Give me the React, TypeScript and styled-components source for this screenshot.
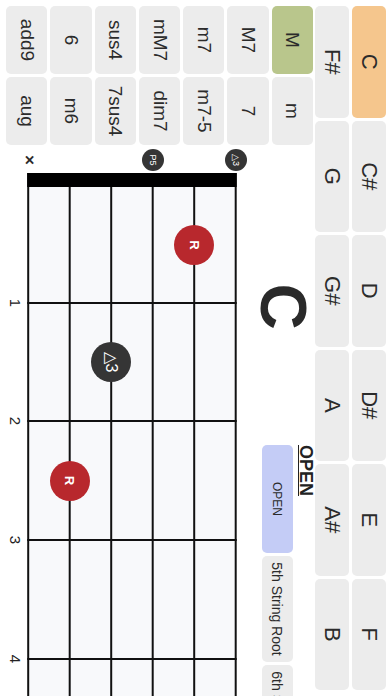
import React from 'react';
import styled, { createGlobalStyle } from 'styled-components';

const Global = createGlobalStyle`
  html, body { margin: 0; padding: 0; width: 392px; height: 696px; overflow: hidden; background: #ffffff; }
  #root { width: 392px; height: 696px; }
  * { box-sizing: border-box; }
`;

const Viewport = styled.div`
  position: relative;
  width: 392px;
  height: 696px;
  overflow: hidden;
  background: #ffffff;
`;

const Landscape = styled.div`
  width: 696px;
  height: 392px;
  transform-origin: 0 0;
  transform: translateX(392px) rotate(90deg);
  font-family: "Liberation Sans", Arial, sans-serif;
  color: #2b2b2b;
  display: flex;
  flex-direction: column;
  background: #ffffff;
`;

const NoteGrid = styled.div`
  display: grid;
  grid-template-columns: repeat(6, 1fr);
  grid-template-rows: 34px 34px;
  gap: 3px;
  padding: 6px 6px 0 6px;
`;

const NoteButton = styled.div<{ $active?: boolean }>`
  display: flex;
  align-items: center;
  justify-content: center;
  border-radius: 5px;
  background: ${(p) => (p.$active ? '#f5c68d' : '#ececec')};
  font-size: 22px;
  color: #2b2b2b;
`;

const Body = styled.div`
  display: flex;
  margin-top: 2px;
  flex: 1;
  min-height: 0;
`;

const QualityGrid = styled.div`
  margin-left: 6px;
  width: 139px;
  height: 307px;
  display: grid;
  grid-template-columns: 68px 68px;
  grid-template-rows: repeat(7, 1fr);
  gap: 3px;
  flex: none;
`;

const QualityButton = styled.div<{ $active?: boolean }>`
  display: flex;
  align-items: center;
  justify-content: center;
  border-radius: 5px;
  background: ${(p) => (p.$active ? '#b9c68c' : '#ececec')};
  font-size: 19px;
  color: #2b2b2b;
`;

const RightPanel = styled.div`
  margin-left: 3px;
  flex: 1;
  display: flex;
  flex-direction: column;
  min-width: 0;
`;

const Header = styled.div`
  height: 56px;
  display: flex;
  flex: none;
`;

const ChordName = styled.div`
  width: 297px;
  flex: none;
  padding: 2px 0 0 20px;
  text-align: center;
  font-size: 64px;
  font-weight: 700;
  line-height: 56px;
  color: #2a2a2a;
`;

const VoicingGroup = styled.div`
  display: flex;
  flex-direction: column;
  min-width: 0;
  flex: 1;
  margin-top: -3px;
`;

const VoicingTitle = styled.div`
  font-size: 18px;
  font-weight: 700;
  line-height: 20px;
  text-decoration: underline;
  text-decoration-thickness: 1px;
  color: #222;
`;

const VoicingRow = styled.div`
  display: flex;
  gap: 3px;
  margin-top: 3px;
  overflow: hidden;
`;

const VoicingButton = styled.div<{ $active?: boolean; $w: number; $fs: number }>`
  flex: none;
  width: ${(p) => p.$w}px;
  height: 31px;
  border-radius: 5px;
  display: flex;
  align-items: center;
  justify-content: ${(p) => (p.$w > 60 ? 'center' : 'flex-start')};
  padding-left: ${(p) => (p.$w > 60 ? 0 : 6)}px;
  white-space: nowrap;
  overflow: hidden;
  background: ${(p) => (p.$active ? '#c4ccf6' : '#ececec')};
  font-size: ${(p) => p.$fs}px;
  color: #2b2b2b;
`;

const Fretboard = styled.div`
  position: relative;
  flex: 1;
  min-height: 0;
`;

const Marker = styled.div<{ $size: number; $tone: 'root' | 'dark'; $fs: number }>`
  position: absolute;
  width: ${(p) => p.$size}px;
  height: ${(p) => p.$size}px;
  margin-left: ${(p) => -p.$size / 2}px;
  margin-top: ${(p) => -p.$size / 2}px;
  border-radius: 50%;
  background: ${(p) => (p.$tone === 'root' ? '#b8282d' : '#353535')};
  color: #ffffff;
  display: flex;
  align-items: center;
  justify-content: center;
  font-size: ${(p) => p.$fs}px;
  font-weight: ${(p) => (p.$tone === 'root' ? 700 : 400)};
`;

const Muted = styled.div`
  position: absolute;
  width: 16px;
  height: 16px;
  margin-left: -8px;
  margin-top: -9px;
  display: flex;
  align-items: center;
  justify-content: center;
  font-size: 17px;
  font-weight: 700;
  color: #2a2a2a;
`;

const FretNumber = styled.div`
  position: absolute;
  width: 20px;
  height: 16px;
  margin-left: -10px;
  margin-top: -8px;
  text-align: center;
  font-size: 15px;
  line-height: 16px;
  color: #222;
`;

const notes = ['C', 'C#', 'D', 'D#', 'E', 'F', 'F#', 'G', 'G#', 'A', 'A#', 'B'];
const qualities = ['M', 'm', 'M7', '7', 'm7', 'm7-5', 'mM7', 'dim7', 'sus4', '7sus4', '6', 'm6', 'add9', 'aug'];

const NUT_X = 25;
const NUT_W = 14;
const STRING0 = 21.3;
const STRING_GAP = 41.5;
const FRETS = [155, 273, 392, 511, 630];
const BOARD_W = 548;

const stringY = (s: number) => STRING0 + (s - 1) * STRING_GAP;
const fretCenter = (f: number) => {
  const prev = f === 1 ? NUT_X + NUT_W : FRETS[f - 2];
  return (prev + FRETS[f - 1]) / 2;
};

type Dot = { string: number; fret: number; label: string; tone: 'root' | 'dark' };
const dots: Dot[] = [
  { string: 1, fret: 0, label: '△3', tone: 'dark' },
  { string: 2, fret: 1, label: 'R', tone: 'root' },
  { string: 3, fret: 0, label: 'P5', tone: 'dark' },
  { string: 4, fret: 2, label: '△3', tone: 'dark' },
  { string: 5, fret: 3, label: 'R', tone: 'root' },
];

function BoardLines() {
  const top = stringY(1);
  const bottom = stringY(6);
  return (
    <svg width={BOARD_W} height={257} style={{ display: 'block' }}>
      <rect x={NUT_X} y={top} width={BOARD_W - NUT_X} height={bottom - top} fill="#f8f9fb" />
      {[1, 2, 3, 4, 5, 6].map((s) => (
        <line key={s} x1={NUT_X} x2={BOARD_W} y1={stringY(s)} y2={stringY(s)} stroke="#111" strokeWidth={2} />
      ))}
      {FRETS.map((x) => (
        <line key={x} x1={x} x2={x} y1={top - 1} y2={bottom + 1} stroke="#111" strokeWidth={2} />
      ))}
      <rect x={NUT_X} y={top - 1} width={NUT_W} height={bottom - top + 2} fill="#000" />
    </svg>
  );
}

export default function App() {
  return (
    <Viewport>
      <Global />
      <Landscape>
        <NoteGrid>
          {notes.map((n) => (
            <NoteButton key={n} $active={n === 'C'}>
              {n}
            </NoteButton>
          ))}
        </NoteGrid>
        <Body>
          <QualityGrid>
            {qualities.map((q) => (
              <QualityButton key={q} $active={q === 'M'}>
                {q}
              </QualityButton>
            ))}
          </QualityGrid>
          <RightPanel>
            <Header>
              <ChordName>C</ChordName>
              <VoicingGroup>
                <VoicingTitle>OPEN</VoicingTitle>
                <VoicingRow>
                  <VoicingButton $active $w={108} $fs={12}>OPEN</VoicingButton>
                  <VoicingButton $w={106} $fs={14}>5th String Root</VoicingButton>
                  <VoicingButton $w={106} $fs={14}>6th String Root</VoicingButton>
                </VoicingRow>
              </VoicingGroup>
            </Header>
            <Fretboard>
              <BoardLines />
              <Muted style={{ left: 12, top: stringY(6) }}>×</Muted>
              {dots.map((d) => {
                const open = d.fret === 0;
                const x = open ? 12 : fretCenter(d.fret);
                return (
                  <Marker
                    key={d.string}
                    $size={open ? 22 : 40}
                    $tone={d.tone}
                    $fs={open ? 9 : d.tone === 'root' ? 13 : 16}
                    style={{ left: x, top: stringY(d.string) }}
                  >
                    {d.label}
                  </Marker>
                );
              })}
              {FRETS.slice(0, 4).map((x, i) => (
                <FretNumber key={x} style={{ left: x, top: 241.5 }}>
                  {i + 1}
                </FretNumber>
              ))}
            </Fretboard>
          </RightPanel>
        </Body>
      </Landscape>
    </Viewport>
  );
}
